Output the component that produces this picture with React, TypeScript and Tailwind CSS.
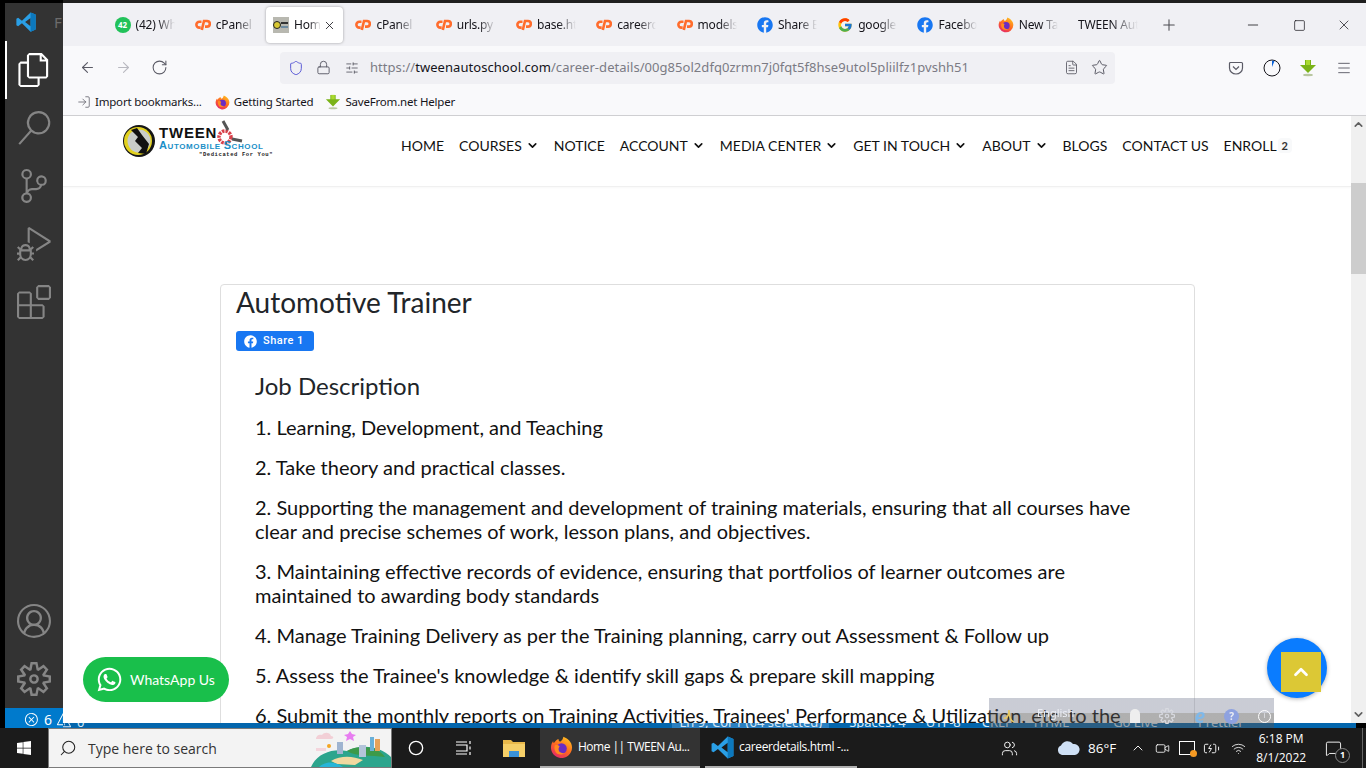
import React from 'react';
import { ArrowLeft, ArrowRight, RotateCw, Shield, Lock, Star, Menu, X, Plus, Minus, Square, ChevronDown, ChevronUp, Search, FileText, SlidersHorizontal, LogIn, Users, Video, MessageSquare, Wifi, BatteryCharging, Circle } from 'lucide-react';
import { VscFiles, VscSearch, VscSourceControl, VscDebugAlt, VscExtensions, VscAccount, VscSettingsGear, VscError, VscWarning } from 'react-icons/vsc';
import { FaFacebook, FaWhatsapp, FaWindows } from 'react-icons/fa';
import { FcGoogle } from 'react-icons/fc';

function VsLogo({ size = 24 }: { size?: number }) {
  return (
    <svg width={size} height={size} viewBox="0 0 24 24" className="shrink-0">
      <path fillRule="evenodd" fill="#2a9fe6" d="M17 1.5 7.6 10.6 3.4 7.4 1.5 8.4V15.6L3.4 16.6 7.6 13.4 17 22.5 22.5 20.2V3.8ZM17 7.5 11 12 17 16.5Z" />
      <path fill="#0c78bd" d="M17 1.5 22.5 3.8V20.2L17 22.5V16.5 7.5Z" />
    </svg>
  );
}

function FirefoxIcon({ size = 16 }: { size?: number }) {
  return (
    <svg width={size} height={size} viewBox="0 0 24 24" className="shrink-0">
      <defs>
        <linearGradient id={`ff${size}`} x1="0.8" y1="0" x2="0.2" y2="1">
          <stop offset="0" stopColor="#ffc31f" />
          <stop offset="0.5" stopColor="#ff6a1f" />
          <stop offset="1" stopColor="#e3226f" />
        </linearGradient>
      </defs>
      <path fill={`url(#ff${size})`} d="M23 12a11 11 0 1 1-21-4.600c.6-1.200 1-1.800 1.300-2 0 1 .3 1.600.8 2C5.400 5 7 3.700 9 3c-.3 1.500.3 2.500 1.500 3C12.500 5 13.500 3 14 .8 18 2.500 23 6 23 12Z" />
      <circle cx="12" cy="13" r="5.500" fill="#6a2cc4" />
      <path fill="#ff8a1f" d="M5 10c2-1 4-.5 5 1-1 1-1.500 3-.5 5 1 1.500 4 2.500 6.500 1.500C13 20 8 20 6 17c-1.300-2-1.800-5-1-7Z" />
    </svg>
  );
}

function GreenArrow({ size = 18 }: { size?: number }) {
  return (
    <svg width={size} height={size} viewBox="0 0 18 18" className="shrink-0">
      <path fill="#7ab317" d="M1 6h5V1h6v5h5l-8 8z" />
      <path fill="#a9d92f" d="M7 1h4v5H7z" />
      <ellipse cx="9" cy="16" rx="5" ry="1.200" fill="#b9c7a0" />
    </svg>
  );
}

function CpanelIcon() {
  return (
    <svg width="16" height="12" viewBox="0 0 16 12" fill="none" stroke="#ff6c2c" strokeWidth="2.600" className="shrink-0">
      <path d="M6.500 2.800H4.300a2.900 2.900 0 0 0 0 5.800h1.400" />
      <path d="M6.800 11 9 2H12a2.700 2.700 0 0 1 0 5.600h-2" />
    </svg>
  );
}

function TabFavicon() {
  return (
    <svg width="16" height="16" viewBox="0 0 16 16" className="shrink-0">
      <rect width="16" height="16" fill="#b8b8b0" />
      <circle cx="4" cy="8" r="3.500" fill="#d8c832" stroke="#222" />
      <rect x="8" y="5" width="7" height="2" fill="#333" />
      <rect x="8" y="9" width="7" height="2" fill="#6c8aa0" />
    </svg>
  );
}

const tabs = [
  { title: '(42) WhatsApp', icon: 'wa' },
  { title: 'cPanel - Main', icon: 'cp' },
  { title: 'Home || TWEEN', icon: 'fav', active: true },
  { title: 'cPanel - File', icon: 'cp' },
  { title: 'urls.py - Edit', icon: 'cp' },
  { title: 'base.html', icon: 'cp' },
  { title: 'careerdetails', icon: 'cp' },
  { title: 'models.py', icon: 'cp' },
  { title: 'Share Button', icon: 'fb' },
  { title: 'google search', icon: 'g' },
  { title: 'Facebook', icon: 'fb' },
  { title: 'New Tab', icon: 'ff' },
  { title: 'TWEEN Automobile', icon: '' },
];

function TabIcon({ kind }: { kind: string }) {
  if (kind === 'wa')
    return (
      <span className="flex h-[16px] w-[16px] shrink-0 items-center justify-center rounded-full bg-[#22c25a] text-[8px] font-bold text-white">42</span>
    );
  if (kind === 'cp') return <CpanelIcon />;
  if (kind === 'fav') return <TabFavicon />;
  if (kind === 'fb') return <FaFacebook className="shrink-0 text-[#1877f2]" size={16} />;
  if (kind === 'g') return <FcGoogle className="shrink-0" size={16} />;
  if (kind === 'ff') return <FirefoxIcon />;
  return null;
}

function BrowserTab({ title, icon, active }: { title: string; icon: string; active?: boolean }) {
  return (
    <div className={`mx-[1.5px] flex h-[36px] w-[77.3px] shrink-0 items-center gap-[5px] rounded pl-[7px] ${active ? '-translate-x-[2px] bg-white shadow-[0_0_3px_rgba(0,0,0,0.35)]' : ''}`}>
      <TabIcon kind={icon} />
      <span className={`overflow-hidden whitespace-nowrap text-[12px] tracking-[-0.2px] text-[#15141a] [mask-image:linear-gradient(to_right,black_55%,transparent)] ${active ? 'w-[27px]' : icon === '' ? 'w-[60px]' : 'w-[39px]'}`}>
        {title}
      </span>
      {active && <X size={13} strokeWidth={1.5} className="-ml-[3px] shrink-0 text-[#15141a]" />}
    </div>
  );
}

function ToolButton({ children }: { children: React.ReactNode }) {
  return <div className="flex h-[36px] w-[36px] shrink-0 items-center justify-center">{children}</div>;
}

function Logo() {
  return (
    <svg width="152" height="46" viewBox="0 0 152 46">
      <circle cx="17" cy="23" r="16" fill="#161616" />
      <circle cx="16" cy="23" r="14" fill="#e2d11f" />
      <circle cx="17" cy="23" r="11.500" fill="#c8ccc8" />
      <path d="M9 12 16 19 13 23 20 30 16 35 24 36 27 26 20 17 15 10Z" fill="#111" />
      <text x="37" y="20" fontFamily="Liberation Sans" fontWeight="700" fontSize="15" letterSpacing="0.8" fill="#111">TWEEN</text>
      <circle cx="103" cy="19" r="6" fill="none" stroke="#d8404a" strokeWidth="3.500" strokeDasharray="2.500 1" />
      <path d="M106 12 101 3M110 21l10 2" stroke="#555" strokeWidth="3" />
      <text x="37" y="31" fontFamily="Liberation Sans" fontWeight="700" fontSize="8" letterSpacing="0.6" fill="#1a8fc8">
        <tspan fontSize="11">A</tspan>UTOMOBILE <tspan fontSize="11">S</tspan>CHOOL
      </text>
      <text x="77" y="38" fontFamily="Liberation Mono" fontWeight="700" fontSize="5.500" letterSpacing="0.600" fill="#222">"Dedicated For You"</text>
    </svg>
  );
}

const navItems = [
  { label: 'HOME' },
  { label: 'COURSES', caret: true },
  { label: 'NOTICE' },
  { label: 'ACCOUNT', caret: true },
  { label: 'MEDIA CENTER', caret: true },
  { label: 'GET IN TOUCH', caret: true },
  { label: 'ABOUT', caret: true },
  { label: 'BLOGS' },
  { label: 'CONTACT US' },
];

const paragraphs = [
  '1. Learning, Development, and Teaching',
  '2. Take theory and practical classes.',
  '2. Supporting the management and development of training materials, ensuring that all courses have clear and precise schemes of work, lesson plans, and objectives.',
  '3. Maintaining effective records of evidence, ensuring that portfolios of learner outcomes are maintained to awarding body standards',
  '4. Manage Training Delivery as per the Training planning, carry out Assessment & Follow up',
  "5. Assess the Trainee's knowledge & identify skill gaps & prepare skill mapping",
  "6. Submit the monthly reports on Training Activities, Trainees' Performance & Utilization, etc. to the management.",
];

function TaskbarScene() {
  return (
    <svg width="80" height="38" viewBox="0 0 80 38" className="shrink-0">
      <path d="M0 38C6 24 22 19 36 22 52 14 70 18 80 28V38Z" fill="#2ca58d" />
      <path d="M20 32C30 26 42 27 52 31L44 36 26 35Z" fill="#f0d9a0" />
      <path d="M8 38C14 32 24 32 32 38Z" fill="#27b5d8" />
      <path d="M36 22C46 16 66 16 74 28 60 26 46 28 36 22Z" fill="#3d9a4a" />
      <rect x="26" y="13" width="6" height="12" fill="#9fb4d0" />
      <rect x="48" y="16" width="7" height="12" fill="#b3c4da" />
      <rect x="64" y="10" width="5" height="12" fill="#e8a25a" />
      <rect x="59" y="8" width="4" height="14" fill="#6ab0d8" />
      <path d="M5 10c0-4 4-5 6-4 2-3 8-3 9 1 3 0 3 3 0 3H7c-2 0-3 0-2 0Z" fill="#f2cfd6" />
      <path d="M5 19h10v3H5Z" fill="#f4d5dc" />
      <path d="M39 2l2 3 4 1-3 2 1 4-4-2-4 2 1-4-3-2 4-1Z" fill="#e77df0" />
      <circle cx="18" cy="17" r="2" fill="#f5a623" />
    </svg>
  );
}

export default function App() {
  return (
    <div className="flex h-[768px] w-[1366px] flex-col overflow-hidden bg-black font-['Noto_Sans',sans-serif]">
      <div className="flex h-[728px]">
        {/* vs code behind the browser */}
        <div className="flex w-[63px] shrink-0 flex-col pl-[5px] pt-[3px]">
          <div className="flex flex-1 flex-col bg-[#333333] text-[#858585]">
            <div className="flex h-[38px] shrink-0 items-center pl-[10px]">
              <VsLogo size={22} />
              <span className="ml-[17px] text-[15px] text-[#6c6c6c]">F</span>
            </div>
            <div className="flex h-[58px] items-center justify-center border-l-2 border-white pr-[2px] text-white"><VscFiles size={34} /></div>
            <div className="flex h-[58px] items-center justify-center"><VscSearch size={34} /></div>
            <div className="flex h-[58px] items-center justify-center"><VscSourceControl size={34} /></div>
            <div className="flex h-[58px] items-center justify-center"><VscDebugAlt size={34} /></div>
            <div className="flex h-[58px] items-center justify-center"><VscExtensions size={34} /></div>
            <div className="mt-auto flex h-[58px] items-center justify-center"><VscAccount size={34} /></div>
            <div className="flex h-[58px] items-center justify-center"><VscSettingsGear size={34} /></div>
          </div>
          <div className="flex h-[20px] shrink-0 items-end overflow-hidden bg-[#007acc] pb-[1px] pl-[19px] text-[14px] text-white">
            <VscError size={15} className="shrink-0" />
            <span className="ml-[5px] leading-[14px]">6</span>
            <VscWarning size={15} className="ml-[4px] shrink-0" />
          </div>
        </div>

        <div className="flex min-w-0 flex-1 flex-col">
          <div className="h-[3px] shrink-0 bg-[#1f1f1f]" />

          {/* browser */}
          <div className="flex h-[720px] shrink-0 flex-col bg-white">
            <div className="flex h-[43px] shrink-0 items-center bg-[#f0f0f4] pl-[43px] pt-[1px]">
              {tabs.map((t) => (
                <BrowserTab key={t.title} title={t.title} icon={t.icon} active={t.active} />
              ))}
              <Plus size={18} strokeWidth={1.4} className="ml-[10px] text-[#4a4a50]" />
              <div className="ml-auto flex h-full text-[#15141a]">
                <div className="flex w-[46px] items-center justify-center"><Minus size={16} strokeWidth={1.2} /></div>
                <div className="flex w-[46px] items-center justify-center"><Square size={13} strokeWidth={1.3} /></div>
                <div className="flex w-[44px] items-center justify-center"><X size={16} strokeWidth={1.1} /></div>
              </div>
            </div>

            <div className="flex h-[43px] shrink-0 items-center bg-[#f9f9fb] pl-[6px] text-[#5b5b66]">
              <ToolButton><ArrowLeft size={17} strokeWidth={1.5} /></ToolButton>
              <ToolButton><ArrowRight size={17} strokeWidth={1.5} className="text-[#b9b9c0]" /></ToolButton>
              <ToolButton><RotateCw size={17} strokeWidth={1.5} /></ToolButton>
              <div className="ml-[103px] flex h-[32px] w-[835px] shrink-0 items-center rounded bg-[#f0f0f4] pl-[8px] text-[14px]">
                <Shield size={16} strokeWidth={1.5} className="text-[#5b5bd6]" />
                <Lock size={15} strokeWidth={1.5} className="ml-[12px]" />
                <SlidersHorizontal size={14} strokeWidth={1.5} className="ml-[14px]" />
                <span className="ml-[11px] whitespace-nowrap text-[13px] tracking-[0.05px] text-[#7b7b84]">
                  https://<span className="text-[#15141a]">tweenautoschool.com</span>/career-details/00g85ol2dfq0zrmn7j0fqt5f8hse9utol5pliilfz1pvshh51
                </span>
                <FileText size={15} strokeWidth={1.4} className="ml-auto" />
                <Star size={17} strokeWidth={1.4} className="ml-[12px] mr-[7px]" />
              </div>
              <div className="ml-[103px] flex">
                <ToolButton>
                  <svg width="16" height="16" viewBox="0 0 16 16" fill="none" stroke="currentColor" strokeWidth="1.200">
                    <path d="M2.500 2.500h11a1 1 0 0 1 1 1V8a6.500 6 0 0 1-13 0V3.500a1 1 0 0 1 1-1Z" />
                    <path d="m5 6.500 3 3 3-3" />
                  </svg>
                </ToolButton>
                <ToolButton>
                  <svg width="18" height="18" viewBox="0 0 18 18">
                    <circle cx="9" cy="9" r="8" fill="none" stroke="#15141a" strokeWidth="1" />
                    <path d="M9 1.500a7.500 7.500 0 0 1 2.500.5L9 8Z" fill="#0a62d8" />
                  </svg>
                </ToolButton>
                <ToolButton><GreenArrow /></ToolButton>
                <ToolButton><Menu size={16} strokeWidth={1.4} /></ToolButton>
              </div>
            </div>

            <div className="flex h-[27px] shrink-0 items-center border-b border-[#cfcfd2] bg-[#f9f9fb] pl-[14px] text-[11.5px] tracking-[-0.2px] text-[#15141a]">
              <LogIn size={14} strokeWidth={1.3} className="text-[#5b5b66]" />
              <span className="ml-[4px]">Import bookmarks...</span>
              <span className="ml-[13px]"><FirefoxIcon size={15} /></span>
              <span className="ml-[4px]">Getting Started</span>
              <span className="ml-[12px]"><GreenArrow size={16} /></span>
              <span className="ml-[4px]">SaveFrom.net Helper</span>
            </div>

            {/* page */}
            <div className="flex min-h-0 flex-1 font-['Lato',sans-serif]">
              <div className="min-w-0 flex-1 overflow-hidden text-[#212529]">
                <div className="flex h-[71px] items-center justify-between border-b border-[#f0f0f0] pl-[59px] pr-[59px] shadow-[0_1px_2px_rgba(0,0,0,0.03)]">
                  <div className="-mt-[20px]"><Logo /></div>
                  <nav className="-mt-[11px] flex items-center gap-[15px] text-[14px] text-[#111]">
                    {navItems.map((n) => (
                      <span key={n.label} className="flex items-center whitespace-nowrap">
                        {n.label}
                        {n.caret && <ChevronDown size={13} strokeWidth={3} className="ml-[4px]" />}
                      </span>
                    ))}
                    <span className="flex items-center whitespace-nowrap">
                      ENROLL
                      <span className="ml-[1px] rounded bg-[#f8f9fa] px-[4px] text-[11px] font-bold leading-[15px] text-[#333]">2</span>
                    </span>
                  </nav>
                </div>

                <div className="ml-[157px] mt-[97px] w-[975px] rounded border border-[#dedede] pl-[15px] pr-[30px]">
                  <h1 className="-mt-[1px] text-[28px] leading-[36px] text-[#212529]">Automotive Trainer</h1>
                  <div className="mt-[11px] flex h-[20px] w-[78px] items-center rounded-[3px] bg-[#1877f2] pl-[8px] font-['Roboto',sans-serif] text-[11px] font-medium text-white">
                    <FaFacebook size={13} />
                    <span className="ml-[6px] pt-[1px] tracking-[0.5px]">Share 1</span>
                  </div>
                  <div className="pl-[19px]">
                    <h2 className="mt-[20px] text-[24px] leading-[29px] text-[#212529]">Job Description</h2>
                    <div className="mt-[15px] text-[20px] leading-[24px] text-[#111]">
                      {paragraphs.map((p) => (
                        <p key={p} className="mb-[16px]">{p}</p>
                      ))}
                    </div>
                  </div>
                </div>
              </div>

              <div className="flex w-[15px] shrink-0 flex-col items-center bg-[#f0f0f0] text-[#606060]">
                <ChevronUp size={13} strokeWidth={3} className="mt-[2px]" />
                <div className="mt-[52px] h-[91px] w-full bg-[#cdcdcd]" />
                <ChevronDown size={13} strokeWidth={3} className="mb-[2px] mt-auto" />
              </div>
            </div>
          </div>

          {/* status bar showing under the browser */}
          <div className="flex h-[5px] shrink-0 items-end overflow-hidden bg-[#0366ad] text-[13px] leading-[14px] text-[#d5e6f5] [&>*]:-mb-[1px] [&>*]:shrink-0 [&>*]:whitespace-nowrap">
            <VscWarning size={15} className="-ml-[6px]" />
            <span className="ml-[5px]">0</span>
            <span className="ml-[588px] bg-[#2a7fc0] px-[7px]">Ln 9, Col 1 (64 selected)</span>
            <span className="ml-[20px]">Spaces: 4</span>
            <span className="ml-[20px]">UTF-8</span>
            <span className="ml-[21px]">CRLF</span>
            <span className="ml-[22px]">HTML</span>
            <span className="ml-[44px]">Go Live</span>
            <span className="ml-[40px]">Prettier</span>
            <span className="ml-auto h-[14px] w-[10px] bg-black" />
          </div>
        </div>
      </div>

      {/* windows taskbar */}
      <div className="flex h-[40px] shrink-0 items-center bg-[#1b1b1b] font-['Open_Sans',sans-serif] text-white">
        <div className="flex w-[48px] shrink-0 justify-center"><FaWindows size={16} /></div>
        <div className="flex h-full w-[344px] shrink-0 items-center border border-[#7a7a7a] bg-[#f3f3f3] pl-[10px] text-[14px] text-[#333]">
          <Search size={18} strokeWidth={1.4} className="-scale-x-100 text-[#222]" />
          <span className="ml-[11px]">Type here to search</span>
          <span className="ml-auto"><TaskbarScene /></span>
        </div>
        <div className="flex w-[48px] shrink-0 justify-center"><Circle size={16} strokeWidth={2} /></div>
        <div className="flex w-[48px] shrink-0 justify-center">
          <svg width="16" height="14" viewBox="0 0 16 14" fill="none" stroke="white" strokeWidth="1.200">
            <path d="M0 1h11M0 13h11M0 4h11v6H0M14 0v3M14 5.500v3M14 11v3" />
          </svg>
        </div>
        <div className="flex w-[52px] shrink-0 justify-center">
          <svg width="22" height="18" viewBox="0 0 22 18">
            <path d="M0 1h8l2 2h12v2H0Z" fill="#e8b84a" />
            <path d="M0 5h22v13H0Z" fill="#f5cf68" />
            <path d="M6 12h10v6H6Z" fill="#3a92d8" />
          </svg>
        </div>
        <div className="flex h-full w-[160px] shrink-0 items-center border-b-2 border-[#b0b0b0] bg-[#333333] pl-[10px] text-[12px] tracking-[-0.5px]">
          <FirefoxIcon size={23} />
          <span className="ml-[5px] whitespace-nowrap">Home || TWEEN Au...</span>
        </div>
        <div className="ml-[5px] flex h-full w-[152px] shrink-0 items-center border-b-2 border-[#b0b0b0] pl-[5px] text-[12px] tracking-[-0.35px]">
          <VsLogo size={25} />
          <span className="ml-[4px] whitespace-nowrap">careerdetails.html -...</span>
        </div>
        <div className="ml-[142px] flex w-[20px] shrink-0 justify-center"><Users size={17} strokeWidth={1.3} /></div>
        <div className="ml-[38px]">
          <svg width="23" height="14" viewBox="0 0 23 14">
            <path d="M5 14a5 5 0 0 1-1-9.500A7 7 0 0 1 16 3a5.500 5.500 0 0 1 2 11Z" fill="#cfe0f5" />
          </svg>
        </div>
        <span className="ml-[8px] text-[13.5px]">86°F</span>
        <ChevronUp size={16} strokeWidth={1.4} className="ml-[14px]" />
        <Video size={15} strokeWidth={1.3} className="ml-[9px]" />
        <div className="relative ml-[9px] flex h-[14px] w-[16px] items-center justify-center border border-white">
          <span className="absolute -bottom-[3px] -right-[3px] h-[7px] w-[7px] rounded-full bg-[#f59a23]" />
        </div>
        <BatteryCharging size={17} strokeWidth={1.3} className="ml-[8px]" />
        <Wifi size={15} strokeWidth={1.3} className="ml-[11px]" />
        <div className="ml-[5px] flex w-[60px] flex-col items-center text-[12px] leading-[19px]">
          <span>6:18 PM</span>
          <span>8/1/2022</span>
        </div>
        <div className="relative ml-[14px]">
          <MessageSquare size={17} strokeWidth={1.3} />
          <span className="absolute -bottom-[6px] -right-[8px] flex h-[15px] w-[15px] items-center justify-center rounded-full border border-[#888] bg-[#1b1b1b] text-[9px] font-bold">1</span>
        </div>
        <div className="ml-auto mr-[3px] h-full w-px bg-[#666]" />
      </div>

      {/* floating bits over the page */}
      <div className="fixed left-[83px] top-[657px] flex h-[45px] w-[146px] items-center rounded-full bg-[#19bf4b] pl-[13px] font-['Lato',sans-serif] text-[14px] text-white">
        <FaWhatsapp size={27} />
        <span className="ml-[7px] whitespace-nowrap">WhatsApp Us</span>
      </div>

      <div className="fixed left-[1267px] top-[638px] h-[60px] w-[60px] rounded-full bg-[#0a7cff] shadow-[0_1px_4px_rgba(0,0,0,0.3)]">
        <div className="absolute left-[14px] top-[14px] flex h-[40px] w-[40px] items-center justify-center bg-[#dcc835]">
          <ChevronUp size={22} strokeWidth={3} className="text-white" />
        </div>
      </div>

      <div className="fixed left-[989px] top-[698px] flex h-[30px] w-[285px] items-center bg-[linear-gradient(#7a809666_0,#7a809666_50%,#55555577_50%)] pt-[6px] text-[#eceef4]">
        <svg width="12" height="14" viewBox="0 0 12 14" fill="none" stroke="#e8c860" strokeWidth="1.500" className="ml-[14px] shrink-0">
          <path d="M1 9c3 1 5-3 5-8 0 5 1 11 5 12" />
        </svg>
        <span className="ml-[22px] -mt-[6px] text-[11px]">English</span>
        <span className="ml-[56px] h-[14px] w-[10px] rounded-t-full bg-[#eeeeee]" />
        <VscSettingsGear size={16} className="ml-[19px] shrink-0 text-[#d8dae0]" />
        <span className="ml-[19px] text-[19px] font-bold italic leading-none text-[#7fb8e8]">e</span>
        <span className="ml-[19px] flex h-[15px] w-[15px] shrink-0 items-center justify-center rounded-full bg-[#8ea2e0] text-[10px] font-bold">?</span>
        <span className="ml-[19px] flex h-[13px] w-[13px] shrink-0 items-center justify-center rounded-full border border-white text-[7px]">i</span>
      </div>
    </div>
  );
}
